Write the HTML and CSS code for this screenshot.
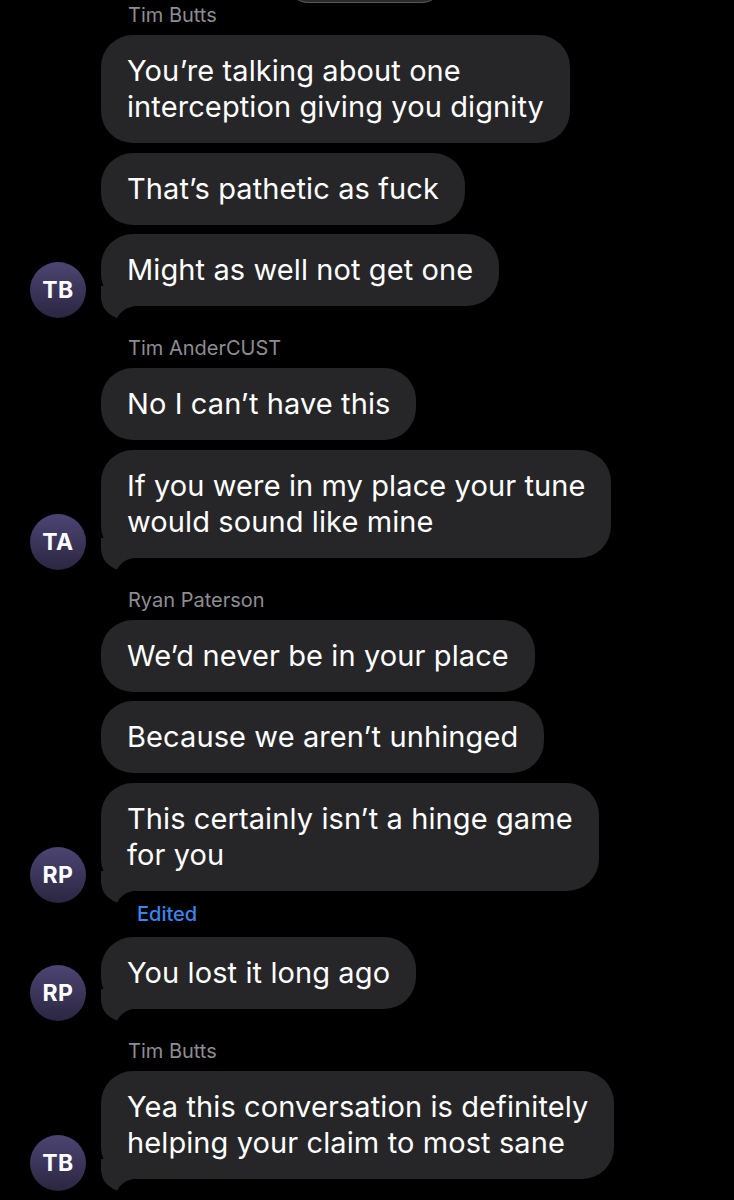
FILE: index.html
```html
<!DOCTYPE HTML>
<html>
<head>
    <meta charset="utf-8">
    <title>Messages</title>
    <link rel="stylesheet" href="styles.css">
</head>
<body>
    <div class="chat">
        <div class="peek"></div>

        <div class="group first">
            <div class="name">Tim Butts</div>
            <div class="row">
                <div class="avatar">TB</div>
                <div class="bubbles">
                    <div class="bubble">You’re talking about one<br>interception giving you dignity</div>
                    <div class="bubble">That’s pathetic as fuck</div>
                    <div class="bubble tail">Might as well not get one</div>
                </div>
            </div>
        </div>

        <div class="group">
            <div class="name">Tim AnderCUST</div>
            <div class="row">
                <div class="avatar">TA</div>
                <div class="bubbles">
                    <div class="bubble">No I can’t have this</div>
                    <div class="bubble tail">If you were in my place your tune<br>would sound like mine</div>
                </div>
            </div>
        </div>

        <div class="group">
            <div class="name">Ryan Paterson</div>
            <div class="row">
                <div class="avatar">RP</div>
                <div class="bubbles">
                    <div class="bubble">We’d never be in your place</div>
                    <div class="bubble">Because we aren’t unhinged</div>
                    <div class="bubble tail">This certainly isn’t a hinge game<br>for you</div>
                </div>
            </div>
            <div class="edited">Edited</div>
            <div class="row">
                <div class="avatar">RP</div>
                <div class="bubbles">
                    <div class="bubble tail">You lost it long ago</div>
                </div>
            </div>
        </div>

        <div class="group">
            <div class="name">Tim Butts</div>
            <div class="row">
                <div class="avatar">TB</div>
                <div class="bubbles">
                    <div class="bubble tail">Yea this conversation is definitely<br>helping your claim to most sane</div>
                </div>
            </div>
        </div>
    </div>
</body>
</html>
```

FILE: styles.css
```css
body{
    margin:0;
    background:#000;
    font-family:"Inter","Liberation Sans",sans-serif;
    color:#fff;
}
.chat{
    width:734px;
    height:1200px;
    overflow:hidden;
}
.peek{
    width:154px;
    height:40px;
    margin:-37px 0 0 288px;
    border-radius:20px;
    background:#2a2a2c;
    border-bottom:1px solid #555;
    box-sizing:border-box;
}
.group{
    margin-top:19px;
}
.group.first{
    margin-top:1px;
}
.name{
    margin-left:128px;
    height:22px;
    line-height:22px;
    font-size:20px;
    color:#8d8d92;
    margin-bottom:9px;
}
.row{
    display:flex;
    align-items:flex-end;
}
.avatar{
    flex:none;
    width:56px;
    height:56px;
    margin:0 15px 0 30px;
    border-radius:50%;
    background:linear-gradient(#4c4573,#2b2641);
    display:flex;
    align-items:center;
    justify-content:center;
    font-size:23px;
    font-weight:700;
    letter-spacing:0.5px;
}
.bubbles{
    display:flex;
    flex-direction:column;
    align-items:flex-start;
    gap:9.5px;
    padding-bottom:12px;
}
.bubble{
    position:relative;
    background:#262628;
    border-radius:32px;
    padding:18px 26px;
    font-size:29px;
    line-height:36px;
    letter-spacing:0.1px;
}
/* tail under the last bubble of a run */
.tail::after{
    content:"";
    position:absolute;
    left:0;
    bottom:-12px;
    width:40px;
    height:32px;
    background:#262628;
    clip-path:path('M0 0 L0 12 C1 22 6 28 16 32 C19 27 23 22 34 20 L40 20 L40 0 Z');
}
.edited{
    margin:1px 0 13px 137px;
    height:20px;
    line-height:20px;
    font-size:20px;
    font-weight:500;
    color:#3d85ee;
}
```
